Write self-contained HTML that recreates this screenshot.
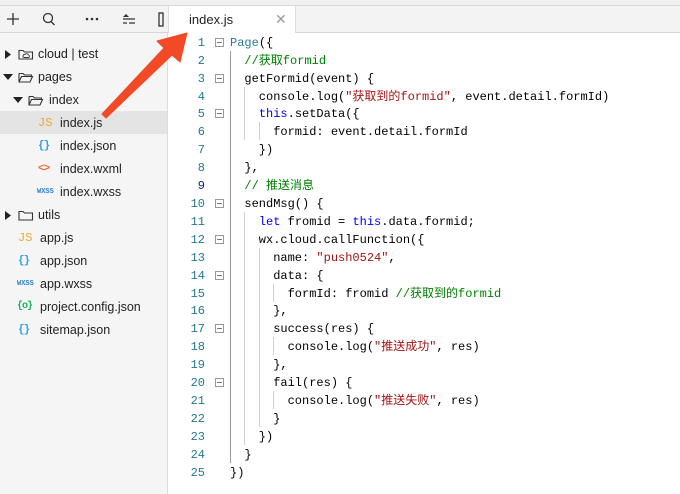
<!DOCTYPE html>
<html><head><meta charset="utf-8"><style>
*{margin:0;padding:0;box-sizing:border-box}
body{width:680px;height:494px;overflow:hidden;background:#fff;position:relative;font-family:"Liberation Sans","Noto Sans CJK SC",sans-serif}
#top{position:absolute;left:0;top:0;width:680px;height:6px;background:#f0f0f0;border-bottom:1px solid #d9d9d9}
#bar{position:absolute;left:0;top:6px;width:680px;height:27px;background:#f3f3f3;border-bottom:1px solid #d6d6d6}
#side{position:absolute;left:0;top:33px;width:168px;height:461px;background:#f5f5f5;border-right:1px solid #dcdcdc}
#tab{position:absolute;left:168px;top:6px;width:128px;height:27px;background:#fff;border-left:1px solid #dcdcdc;border-right:1px solid #dcdcdc;font-size:13px;color:#222;line-height:27px;padding-left:20px}
#tab .x{position:absolute;left:106px;top:0;color:#999;font-size:14px}
.row{position:absolute;left:0;width:167px;height:23px;font-size:12.5px;color:#222;line-height:24px;white-space:nowrap}
.row.sel{background:#e4e4e4}
.ic{position:absolute;font-size:11px;font-family:"Liberation Mono",monospace;font-weight:bold;letter-spacing:-1px}
.ln{position:absolute;left:168px;width:37px;text-align:right;color:#237893;font-size:12px;font-family:"Liberation Mono",monospace;height:18px;line-height:20px}
.cl{position:absolute;left:230px;white-space:pre;height:18px;line-height:20px;color:#000;font-family:"Liberation Mono","Noto Sans CJK SC",monospace;font-size:12px}
.fb{position:absolute;left:215px;width:9px;height:9px;border:1px solid #999;}
.fb:after{content:"";position:absolute;left:1px;top:3px;width:5px;height:1px;background:#777}
.g{position:absolute;width:1px;background:#d0d0d0}
.k{color:#0000ff}.s{color:#a31515}.c{color:#008000}.t{color:#267f99}
</style></head><body>
<div id="top"></div>
<div id="bar">
<svg width="168" height="27" style="position:absolute;left:0;top:0">
<g stroke="#333" stroke-width="1.3" fill="none">
<path d="M13 7v12M7 13h12"/>
<circle cx="48" cy="12" r="4.5"/><path d="M51 15.5l3.5 3.5"/>
<path d="M123 13h12M129 17h6M123 17h4"/>
<rect x="159" y="7" width="4" height="13"/>
</g>
<g fill="#333"><circle cx="87" cy="13" r="1.3"/><circle cx="92" cy="13" r="1.3"/><circle cx="97" cy="13" r="1.3"/><path d="M123 11l3-3 3 3z"/></g>
</svg>
</div>
<div id="tab">index.js<span class="x">✕</span></div>
<div id="side">
<div class="row" style="top:9px"><svg style="position:absolute;left:5px;top:7px" width="30" height="11"><path d="M0 1l6 4.5-6 4.5z" fill="#222"/><path d="M14 1.5h4l1.5 1.5h8v7h-13.5z" fill="none" stroke="#333" stroke-width="1.1"/><path d="M19 8.5a1.5 1.5 0 0 1 1-3a2 2 0 0 1 3.5 0.5a1.3 1.3 0 0 1 0 2.5z" fill="none" stroke="#333" stroke-width="0.9"/></svg><span style="position:absolute;left:38px">cloud | test</span></div>
<div class="row" style="top:32px"><svg style="position:absolute;left:3px;top:7px" width="32" height="11"><path d="M0 2h10l-5 6z" fill="#222"/><path d="M16 1.5h4l1.5 1.5h7v1.5M16 1.5v8.5h11l2.5-5.5h-11l-2.5 5.5" fill="none" stroke="#333" stroke-width="1.1"/></svg><span style="position:absolute;left:38px">pages</span></div>
<div class="row" style="top:55px"><svg style="position:absolute;left:13px;top:7px" width="32" height="11"><path d="M0 2h10l-5 6z" fill="#222"/><path d="M16 1.5h4l1.5 1.5h7v1.5M16 1.5v8.5h11l2.5-5.5h-11l-2.5 5.5" fill="none" stroke="#333" stroke-width="1.1"/></svg><span style="position:absolute;left:49px">index</span></div>
<div class="row sel" style="top:78px"><span class="ic" style="left:38px;color:#f0a630;font-weight:normal;font-size:12px;letter-spacing:0">JS</span><span style="position:absolute;left:60px">index.js</span></div>
<div class="row" style="top:101px"><span class="ic" style="left:38px;color:#2aa3e0">{}</span><span style="position:absolute;left:60px">index.json</span></div>
<div class="row" style="top:124px"><span class="ic" style="left:38px;color:#f06a3a">&lt;&gt;</span><span style="position:absolute;left:60px">index.wxml</span></div>
<div class="row" style="top:147px"><span class="ic" style="left:37px;color:#2a7fd0;font-size:7px;letter-spacing:0">WXSS</span><span style="position:absolute;left:60px">index.wxss</span></div>
<div class="row" style="top:170px"><svg style="position:absolute;left:5px;top:7px" width="30" height="11"><path d="M0 1l6 4.5-6 4.5z" fill="#222"/><path d="M14 1.5h4l1.5 1.5h8v7h-13.5z" fill="none" stroke="#333" stroke-width="1.1"/></svg><span style="position:absolute;left:38px">utils</span></div>
<div class="row" style="top:193px"><span class="ic" style="left:18px;color:#f0a630;font-weight:normal;font-size:12px;letter-spacing:0">JS</span><span style="position:absolute;left:40px">app.js</span></div>
<div class="row" style="top:216px"><span class="ic" style="left:18px;color:#2aa3e0">{}</span><span style="position:absolute;left:40px">app.json</span></div>
<div class="row" style="top:239px"><span class="ic" style="left:17px;color:#2a7fd0;font-size:7px;letter-spacing:0">WXSS</span><span style="position:absolute;left:40px">app.wxss</span></div>
<div class="row" style="top:262px"><span class="ic" style="left:17px;color:#1aad5e;font-size:10px">{o}</span><span style="position:absolute;left:40px">project.config.json</span></div>
<div class="row" style="top:285px"><span class="ic" style="left:18px;color:#2aa3e0">{}</span><span style="position:absolute;left:40px">sitemap.json</span></div>
</div>
<div class="ln" style="top:33px">1</div><div class="ln" style="top:51px">2</div><div class="ln" style="top:69px">3</div><div class="ln" style="top:87px">4</div><div class="ln" style="top:104px">5</div><div class="ln" style="top:122px">6</div><div class="ln" style="top:140px">7</div><div class="ln" style="top:158px">8</div><div class="ln" style="top:176px;color:#0b216f">9</div><div class="ln" style="top:194px">10</div><div class="ln" style="top:212px">11</div><div class="ln" style="top:230px">12</div><div class="ln" style="top:248px">13</div><div class="ln" style="top:266px">14</div><div class="ln" style="top:284px">15</div><div class="ln" style="top:301px">16</div><div class="ln" style="top:319px">17</div><div class="ln" style="top:337px">18</div><div class="ln" style="top:355px">19</div><div class="ln" style="top:373px">20</div><div class="ln" style="top:391px">21</div><div class="ln" style="top:409px">22</div><div class="ln" style="top:427px">23</div><div class="ln" style="top:445px">24</div><div class="ln" style="top:463px">25</div>
<div class="fb" style="top:38px"></div><div class="fb" style="top:74px"></div><div class="fb" style="top:109px"></div><div class="fb" style="top:199px"></div><div class="fb" style="top:235px"></div><div class="fb" style="top:271px"></div><div class="fb" style="top:324px"></div><div class="fb" style="top:378px"></div>
<div class="g" style="left:230px;top:51px;height:412px;background:#999"></div>
<div class="g" style="left:244px;top:87px;height:53px"></div>
<div class="g" style="left:259px;top:122px;height:18px"></div>
<div class="g" style="left:244px;top:212px;height:233px"></div>
<div class="g" style="left:259px;top:248px;height:179px"></div>
<div class="g" style="left:273px;top:284px;height:18px"></div>
<div class="g" style="left:273px;top:337px;height:18px"></div>
<div class="g" style="left:273px;top:391px;height:18px"></div>
<div class="cl" style="top:33px"><span class="t">Page</span>({</div>
<div class="cl" style="top:51px">  <span class="c">//获取formid</span></div>
<div class="cl" style="top:69px">  getFormid(event) {</div>
<div class="cl" style="top:87px">    console.log(<span class="s">"获取到的formid"</span>, event.detail.formId)</div>
<div class="cl" style="top:104px">    <span class="k">this</span>.setData({</div>
<div class="cl" style="top:122px">      formid: event.detail.formId</div>
<div class="cl" style="top:140px">    })</div>
<div class="cl" style="top:158px">  },</div>
<div class="cl" style="top:176px">  <span class="c">// 推送消息</span></div>
<div class="cl" style="top:194px">  sendMsg() {</div>
<div class="cl" style="top:212px">    <span class="k">let</span> fromid = <span class="k">this</span>.data.formid;</div>
<div class="cl" style="top:230px">    wx.cloud.callFunction({</div>
<div class="cl" style="top:248px">      name: <span class="s">"push0524"</span>,</div>
<div class="cl" style="top:266px">      data: {</div>
<div class="cl" style="top:284px">        formId: fromid <span class="c">//获取到的formid</span></div>
<div class="cl" style="top:301px">      },</div>
<div class="cl" style="top:319px">      success(res) {</div>
<div class="cl" style="top:337px">        console.log(<span class="s">"推送成功"</span>, res)</div>
<div class="cl" style="top:355px">      },</div>
<div class="cl" style="top:373px">      fail(res) {</div>
<div class="cl" style="top:391px">        console.log(<span class="s">"推送失败"</span>, res)</div>
<div class="cl" style="top:409px">      }</div>
<div class="cl" style="top:427px">    })</div>
<div class="cl" style="top:445px">  }</div>
<div class="cl" style="top:463px">})</div>
<svg width="680" height="494" style="position:absolute;left:0;top:0;pointer-events:none">
<path d="M187 33L180 62L172 55L106 118L102 114L164 48L157 41Z" fill="#f24a26" stroke="#f24a26" stroke-width="1" stroke-linejoin="round"/>
</svg>
</body></html>
